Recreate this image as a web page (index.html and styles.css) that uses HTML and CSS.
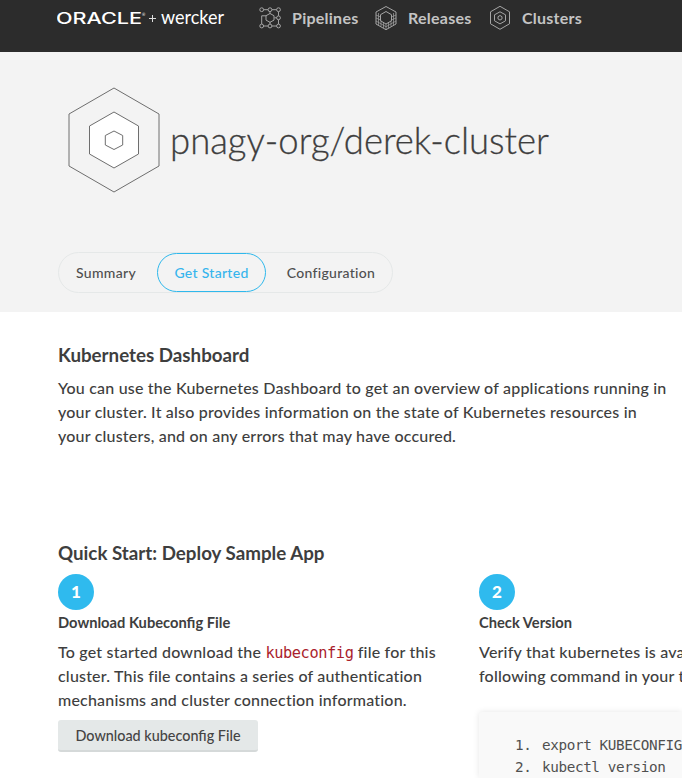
FILE: index.html
```html
<!DOCTYPE html>
<html lang="en">
<head>
<meta charset="utf-8">
<title>pnagy-org/derek-cluster</title>
<link rel="stylesheet" href="styles.css">
</head>
<body>
<header class="topbar">
  <a class="brand">
    <svg width="170" height="36" viewBox="0 0 170 36">
      <text class="brand-oracle" x="-1" y="23.800" textLength="86" lengthAdjust="spacingAndGlyphs">ORACLE</text>
      <text class="brand-reg" x="85" y="16">®</text>
      <path d="M92 18.500h7M95.500 15v7" stroke="#ddd" fill="none"/>
      <text class="brand-wercker" x="104" y="23.500" textLength="63" lengthAdjust="spacingAndGlyphs">wercker</text>
    </svg>
  </a>
  <nav class="mainnav">
    <a class="nav-item pipelines">
      <svg width="24" height="26" viewBox="0 0 24 26">
        <path d="M5.700 4.700H10M14 4.700h4.500M20.500 6.700v4.100M20.500 14.800V19M5.700 21H10M14 21h4.500M3.700 19v-8.200H8M12 6.700v2M12 17v2M16.500 12.800h2M12 8.500l4 2.200v4.400l-4 2.200-4-2.200v-4.400z"/>
        <circle cx="3.700" cy="4.700" r="1.900"/><circle cx="12" cy="4.700" r="1.900"/><circle cx="20.500" cy="4.700" r="1.900"/>
        <circle cx="20.500" cy="12.800" r="1.900"/><circle cx="3.700" cy="21" r="1.900"/><circle cx="12" cy="21" r="1.900"/><circle cx="20.500" cy="21" r="1.900"/>
      </svg>
      <span>Pipelines</span>
    </a>
    <a class="nav-item releases">
      <svg width="22" height="26" viewBox="0 0 22 26">
        <path class="outline" d="M11 1.500L21 7v12l-10 5.700L1 19V7zM11 6.500l5.500 3.200v6.100L11 19l-5.500-3.200V9.700z"/>
        <path d="M3.500 8v12M6 15.500v6M8.500 17v6M11 19v6M13.500 17v6M16 15.500v6M18.500 8v12M1 10l4.500 2M1 13l4.500 2M1 16l10 5.700L21 16M21 10l-4.500 2M21 13l-4.500 2"/>
      </svg>
      <span>Releases</span>
    </a>
    <a class="nav-item clusters">
      <svg width="22" height="26" viewBox="0 0 22 26">
        <path d="M11 1.300l9.500 5.500v12L11 24.300 1.500 18.800v-12zM11 6.800l5.500 3v6l-5.500 3.100-5.500-3.100v-6zM11 10.500l2 1.200v2.200l-2 1.200-2-1.200v-2.200z"/>
      </svg>
      <span>Clusters</span>
    </a>
  </nav>
</header>

<section class="hero">
  <div class="title-row">
    <svg class="cluster-icon" width="92" height="106" viewBox="0 0 92 106">
      <path d="M46 1l45 26v52L46 105 1 79V27z"/>
      <path class="inner" d="M46 25l24.500 14v28L46 81 21.500 67V39z"/>
      <path d="M46 44l8.700 4.500v9.500L46 62.500 37.300 58v-9.500z"/>
    </svg>
    <h1>pnagy-org/derek-cluster</h1>
  </div>
  <nav class="tabs">
    <a class="tab tab-summary">Summary</a>
    <a class="tab active">Get Started</a>
    <a class="tab tab-config">Configuration</a>
  </nav>
</section>

<main>
  <section class="dashboard">
    <h2>Kubernetes Dashboard</h2>
    <p>You can use the Kubernetes Dashboard to get an overview of applications running in<br>your cluster. It also provides information on the state of Kubernetes resources in<br>your clusters, and on any errors that may have occured.</p>
  </section>
  <section class="quickstart">
    <h2>Quick Start: Deploy Sample App</h2>
    <div class="steps">
      <article class="step">
        <div class="badge">1</div>
        <h3>Download Kubeconfig File</h3>
        <p>To get started download the <code>kubeconfig</code> file for this<br>cluster. This file contains a series of authentication<br>mechanisms and cluster connection information.</p>
        <button class="download">Download kubeconfig File</button>
      </article>
      <article class="step">
        <div class="badge">2</div>
        <h3>Check Version</h3>
        <p>Verify that kubernetes is available<br>following command in your terminal</p>
        <ol class="commands">
          <li>export KUBECONFIG</li>
          <li>kubectl version</li>
        </ol>
      </article>
    </div>
  </section>
</main>
</body>
</html>
```
FILE: styles.css
```css
* { box-sizing: border-box; }
body {
  margin: 0;
  height: 778px;
  overflow: hidden;
  background: #fff;
  color: #3e3e3e;
  font-family: Lato, sans-serif;
  font-size: 16px;
  font-weight: 500;
}
h1, h2, h3, p, ol { margin: 0; }
svg { display: block; flex: none; fill: none; }

.topbar {
  display: flex;
  align-items: flex-start;
  height: 52px;
  padding-left: 57px;
  background: #2c2c2c;
  white-space: nowrap;
}
.brand text { fill: #fff; font-family: Lato, sans-serif; }
.brand .brand-oracle { font-family: Inter, sans-serif; font-size: 15.6px; font-weight: 500; }
.brand .brand-reg { font-size: 4px; }
.brand .brand-wercker { font-size: 19px; font-weight: 400; }
.mainnav { display: flex; height: 36px; margin-left: 31px; }
.nav-item {
  display: flex;
  align-items: center;
  color: #c4c4c4;
  font-size: 16px;
  font-weight: 700;
  letter-spacing: .25px;
}
.nav-item span { line-height: 20px; padding-bottom: 1px; }
.nav-item svg { stroke: #a5a5a5; stroke-width: 1; }
.nav-item.pipelines { width: 117px; gap: 10px; }
.nav-item.releases { width: 114px; gap: 11px; }
.nav-item.clusters { gap: 11px; }
.nav-item.releases svg { stroke-width: .7; }
.releases .outline { stroke-width: 1; }

.hero { height: 260px; padding: 35px 0 0 57px; background: #f3f3f3; }
.title-row { display: flex; align-items: center; height: 106px; padding-left: 11px; }
.cluster-icon { stroke: #6e6e6e; stroke-width: 1; }
.cluster-icon .inner { fill: #fff; }
h1 {
  margin-left: 10px;
  font-size: 36.5px;
  font-weight: 300;
  line-height: 44px;
  white-space: nowrap;
  -webkit-text-stroke: .3px #3e3e3e;
}
.tabs {
  display: flex;
  width: 335px;
  height: 41px;
  margin: 59px 0 0 1px;
  border: 1px solid #e5e8e8;
  border-radius: 21px;
}
.tab {
  display: flex;
  align-items: center;
  justify-content: center;
  height: 39px;
  color: #4f4f4f;
  font-size: 14px;
  letter-spacing: .3px;
}
.tab-summary { width: 98px; padding-right: 4px; }
.tab.active { width: 109px; border: 1px solid #2fb8ec; border-radius: 20px; color: #36b5ed; }
.tab-config { width: 126px; padding-left: 4px; }

main { padding: 31px 0 0 58px; }
h2 { font-size: 18.750px; font-weight: 700; line-height: 24px; white-space: nowrap; }
p { line-height: 24px; letter-spacing: .2px; white-space: nowrap; }
.dashboard { height: 198px; }
.dashboard p { margin-top: 9px; }
.steps { display: grid; grid-template-columns: 421px 203px; margin-top: 9px; }
.step { min-width: 0; }
.badge {
  display: flex;
  align-items: center;
  justify-content: center;
  width: 36px;
  height: 36px;
  border-radius: 50%;
  background: #2fbaee;
  color: #fff;
  font-size: 17px;
  font-weight: 900;
  line-height: 1;
  padding-bottom: 1px;
}
h3 { margin-top: 2px; font-size: 14.7px; font-weight: 700; line-height: 20px; }
.step p { margin-top: 8px; }
code {
  color: #aa1e2d;
  font-family: "DejaVu Sans Mono", monospace;
  font-size: 15.3px;
  letter-spacing: -.4px;
  line-height: 1;
}
.download {
  display: block;
  width: 200px;
  height: 32px;
  margin-top: 8px;
  padding: 0;
  border: 0;
  border-bottom: 2px solid #d5d9d9;
  border-radius: 3px;
  background: #e4e8e8;
  color: #444;
  font: 500 14.4px Lato, sans-serif;
}
.commands {
  height: 66px;
  margin-top: 24px;
  padding: 22px 0 0 36px;
  border-radius: 3px 0 0 0;
  background: #f9f9f9;
  box-shadow: 0 0 6px rgba(0, 0, 0, .1);
  color: #505050;
  font: 14.3px/22px "DejaVu Sans Mono", monospace;
  letter-spacing: -.38px;
  list-style: none;
  counter-reset: line;
  white-space: nowrap;
}
.commands li { display: flex; }
.commands li::before {
  counter-increment: line;
  content: counter(line) ".";
  width: 27px;
}
```
